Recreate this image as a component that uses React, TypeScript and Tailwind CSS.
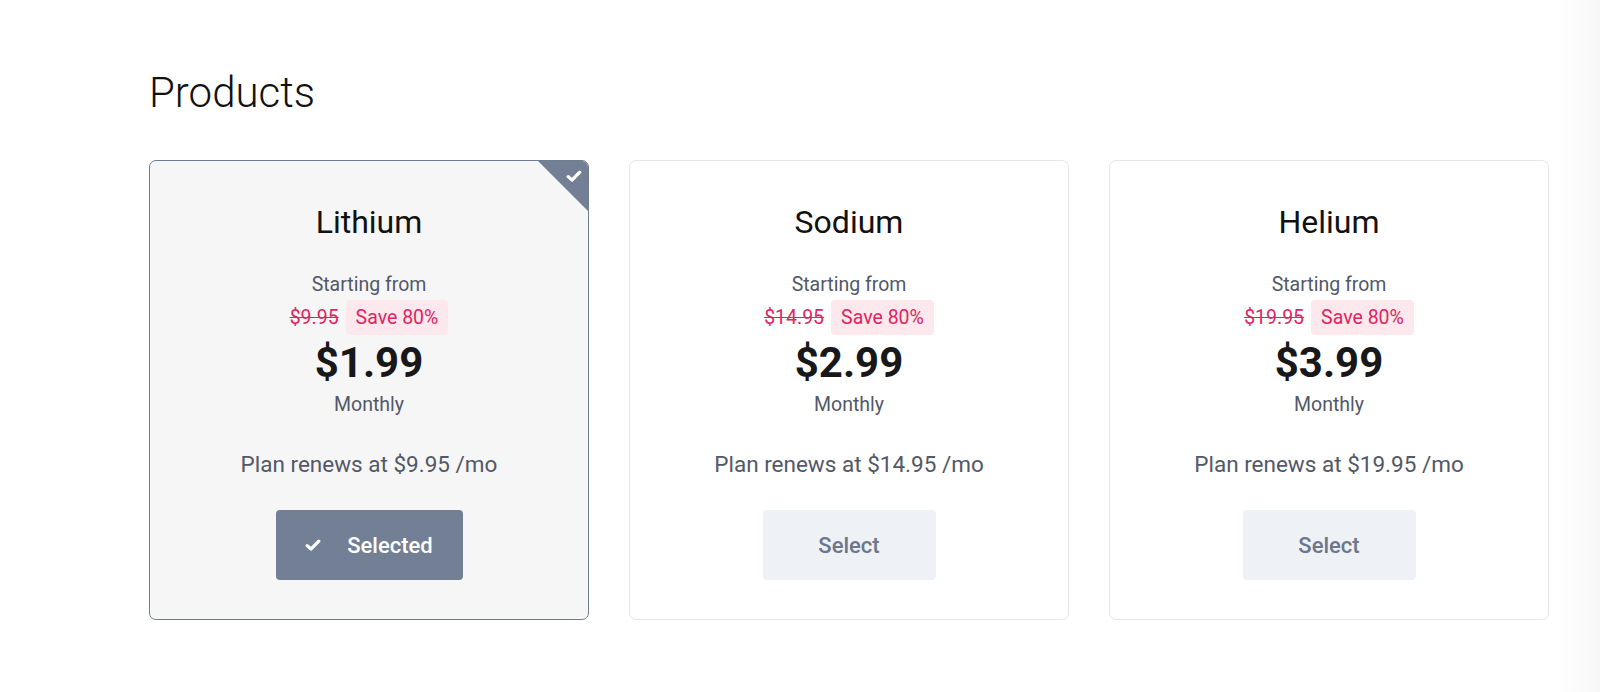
import type { ReactNode } from "react";

interface Plan {
  name: string;
  was: string;
  price: string;
  renews: string;
  selected?: boolean;
}

const plans: Plan[] = [
  { name: "Lithium", was: "$9.95", price: "$1.99", renews: "$9.95", selected: true },
  { name: "Sodium", was: "$14.95", price: "$2.99", renews: "$14.95" },
  { name: "Helium", was: "$19.95", price: "$3.99", renews: "$19.95" },
];

function Check({ className }: { className?: string }) {
  return (
    <svg className={className} viewBox="0 0 16 12" fill="none">
      <path
        d="M2.2 6.6 L6 10 L13.8 2.2"
        stroke="white"
        strokeWidth={3.2}
        strokeLinecap="round"
        strokeLinejoin="round"
      />
    </svg>
  );
}

function Button({ selected, children }: { selected?: boolean; children: ReactNode }) {
  if (selected) {
    return (
      <button className="mt-[32px] flex h-[70px] w-[187px] items-center justify-center gap-[26px] rounded-[4px] bg-[#737f94] text-[22px] font-medium text-white">
        <Check className="h-[12px] w-[16px]" />
        <span>{children}</span>
      </button>
    );
  }
  return (
    <button className="mt-[32px] flex h-[70px] w-[173px] items-center justify-center rounded-[4px] bg-[#eef1f6] text-[22px] font-medium text-[#6c778b]">
      {children}
    </button>
  );
}

function PlanCard({ plan }: { plan: Plan }) {
  return (
    <div
      className={`relative flex flex-col items-center overflow-hidden rounded-[7px] border pt-[41px] pb-[39px] ${
        plan.selected ? "border-[#6f7d93] bg-[#f6f6f6]" : "border-[#e6e6e6] bg-white"
      }`}
    >
      {plan.selected && (
        <div className="absolute top-0 right-0 h-[50px] w-[50px] bg-[#737f94] [clip-path:polygon(0_0,100%_0,100%_100%)]">
          <Check className="absolute top-[9px] right-[6px] h-[12px] w-[16px]" />
        </div>
      )}
      <h3 className="text-[32px] leading-[40px] text-[#111]">{plan.name}</h3>
      <p className="mt-[31px] text-[19.5px] leading-[24px] text-[#525868]">Starting from</p>
      <div className="mt-[3px] flex items-center gap-[7px]">
        <span className="text-[19.5px] leading-[24px] text-[#e0245e] line-through">{plan.was}</span>
        <span className="flex h-[35px] items-center rounded-[4px] bg-[#fde8ee] px-[10px] text-[19.5px] text-[#e0245e]">
          Save 80%
        </span>
      </div>
      <p className="mt-[4px] text-[42px] leading-[48px] font-bold text-[#18181b]">{plan.price}</p>
      <p className="mt-[6px] text-[19.5px] leading-[24px] text-[#525868]">Monthly</p>
      <p className="mt-[33px] text-[22.5px] leading-[28px] text-[#525868]">
        Plan renews at {plan.renews} /mo
      </p>
      <Button selected={plan.selected}>{plan.selected ? "Selected" : "Select"}</Button>
    </div>
  );
}

export default function App() {
  return (
    <div className="flex min-h-[692px] bg-white font-['Roboto',sans-serif]">
      <main className="flex-1 pt-[68px] pl-[149px]">
        <h1 className="text-[42px] leading-[50px] font-light text-[#111]">Products</h1>
        <div className="mt-[42px] grid grid-cols-[440px_440px_440px] gap-[40px]">
          {plans.map((p) => (
            <PlanCard key={p.name} plan={p} />
          ))}
        </div>
      </main>
      <div className="w-[44px] bg-linear-to-r from-white to-[#f7f7f7]" />
    </div>
  );
}
